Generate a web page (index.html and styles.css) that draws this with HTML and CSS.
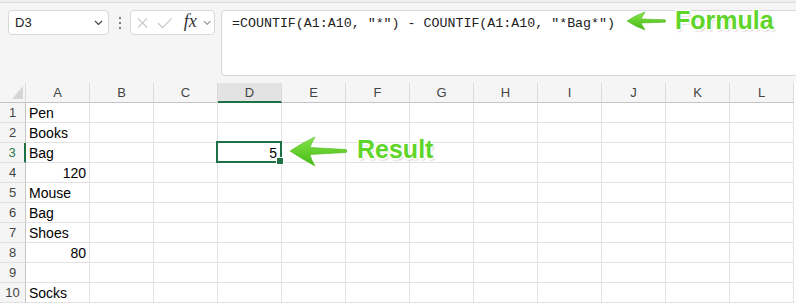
FILE: index.html
```html
<!DOCTYPE html>
<html lang="en">
<head>
    <meta charset="UTF-8">
    <title>COUNTIF Beispiel</title>
    <link rel="stylesheet" href="styles.css">
</head>
<body>
    <div class="page">
        <div class="topline"></div>
        <div class="toolbar">
            <div class="namebox">
                <span>D3</span>
                <svg width="9" height="6" viewBox="0 0 9 6"><path d="M1 1 L4.5 4.5 L8 1" fill="none" stroke="#444" stroke-width="1.2"/></svg>
            </div>
            <div class="dots"><span></span><span></span><span></span></div>
            <div class="fxbox">
                <svg class="ico" width="12" height="12" viewBox="0 0 12 12"><path d="M1 1 L11 11 M11 1 L1 11" stroke="#c4c4c4" stroke-width="1.2"/></svg>
                <svg class="ico" width="17" height="12" viewBox="0 0 17 12"><path d="M1 6 L6 11 L16 1" fill="none" stroke="#c4c4c4" stroke-width="1.2"/></svg>
                <span class="fx">fx</span>
                <svg width="9" height="6" viewBox="0 0 9 6"><path d="M1 1 L4.5 4.5 L8 1" fill="none" stroke="#888" stroke-width="1.1"/></svg>
            </div>
            <div class="formula">=COUNTIF(A1:A10, "*") - COUNTIF(A1:A10, "*Bag*")</div>
        </div>

        <div class="sheet" id="sheet">
            <!-- Zellen werden per Script erzeugt -->
        </div>

        <!-- Hinweise mit Pfeilen -->
        <svg class="arrow arrow-formula" width="44" height="24" viewBox="0 0 44 24">
            <defs>
                <linearGradient id="g1" x1="0" y1="0" x2="0" y2="1">
                    <stop offset="0" stop-color="#86e64a"/>
                    <stop offset="1" stop-color="#45b814"/>
                </linearGradient>
            </defs>
            <path d="M3 12 Q12 6 21 3 Q18 8 17 10 L41 10.8 Q42.5 12 41 13.2 L17 14 Q18 16 21 21 Q12 18 3 12 Z" fill="url(#g1)" stroke="#4fb51f" stroke-width="0.6"/>
        </svg>
        <div class="note note-formula">Formula</div>

        <svg class="arrow arrow-result" width="64" height="36" viewBox="0 0 64 36">
            <defs>
                <linearGradient id="g2" x1="0" y1="0" x2="0" y2="1">
                    <stop offset="0" stop-color="#86e64a"/>
                    <stop offset="1" stop-color="#45b814"/>
                </linearGradient>
            </defs>
            <path d="M3 16 Q15 8 28 2 Q24 9 23 12.5 L59 14.5 Q61 16 59 17.5 L23 19.5 Q24 24 28 31 Q15 24 3 16 Z" fill="url(#g2)" stroke="#4fb51f" stroke-width="0.6"/>
        </svg>
        <div class="note note-result">Result</div>
    </div>

    <script>
        // Spalten und Werte der Tabelle
        const cols = ['A', 'B', 'C', 'D', 'E', 'F', 'G', 'H', 'I', 'J', 'K', 'L'];
        const values = {
            A1: 'Pen', A2: 'Books', A3: 'Bag', A4: 120, A5: 'Mouse',
            A6: 'Bag', A7: 'Shoes', A8: 80, A10: 'Socks', D3: 5
        };
        const sheet = document.getElementById('sheet');

        function addCell(cls, text) {
            const cell = document.createElement('div');
            cell.className = cls;
            cell.innerText = text;
            sheet.appendChild(cell);
            return cell;
        }

        // Kopfzeile
        const corner = addCell('cell corner', '');
        corner.innerHTML = '<svg width="11" height="13" viewBox="0 0 11 13"><path d="M11 0 L11 13 L0 13 Z" fill="#d6d6d6"/></svg>';
        cols.forEach(c => addCell('cell colhead' + (c === 'D' ? ' sel' : ''), c));

        // Zeilen 1 bis 10
        for (let r = 1; r <= 10; r++) {
            addCell('cell rowhead' + (r === 3 ? ' sel' : ''), r);
            cols.forEach(c => {
                const v = values[c + r];
                let cls = 'cell';
                if (typeof v === 'number') cls += ' num';
                if (c + r === 'D3') cls += ' active';
                addCell(cls, v === undefined ? '' : v);
            });
        }
    </script>
</body>
</html>
```

FILE: styles.css
```css
* {
    box-sizing: border-box;
}
body {
    margin: 0;
    background-color: #fff;
    font-family: 'Liberation Sans', Arial, sans-serif;
    color: #000;
    overflow: hidden;
}
.page {
    position: relative;
    width: 796px;
    height: 306px;
    overflow: hidden;
}
.topline {
    height: 2px;
    background-color: #f0f0f0;
}
.toolbar {
    display: flex;
    align-items: flex-start;
    height: 81px;
    padding: 7px 0 0 8px;
    background-color: #f5f5f5;
    border-top: 1px solid #dcdcdc;
}
.namebox {
    width: 101px;
    height: 25px;
    display: flex;
    align-items: center;
    justify-content: space-between;
    padding: 0 5px 0 6px;
    background: white;
    border: 1px solid #d8d8d8;
    border-radius: 4px;
    font-size: 13px;
    color: #222;
}
.dots {
    width: 21px;
    height: 25px;
    display: flex;
    flex-direction: column;
    align-items: center;
    justify-content: center;
    gap: 3px;
}
.dots span {
    width: 2px;
    height: 2px;
    border-radius: 1px;
    background-color: #555;
}
.fxbox {
    width: 85px;
    height: 25px;
    display: flex;
    align-items: center;
    padding: 0 3px 0 6px;
    background: white;
    border: 1px solid #d8d8d8;
    border-radius: 4px;
}
.fxbox .ico {
    margin-right: 9px;
}
.fxbox .fx {
    font-family: 'Liberation Serif', 'Times New Roman', serif;
    font-style: italic;
    font-size: 18px;
    color: #333;
    margin: -2px 6px 0 2px;
}
.formula {
    flex: 1;
    height: 66px;
    margin-left: 6px;
    margin-right: -6px;
    padding: 5px 10px;
    background: white;
    border: 1px solid #d8d8d8;
    border-radius: 4px;
    font-family: 'Liberation Mono', 'Courier New', monospace;
    font-size: 13.3px;
    line-height: 16px;
    color: #222;
    white-space: pre;
}
.sheet {
    display: grid;
    grid-template-columns: 26px repeat(12, 64px);
    grid-auto-rows: 20px;
}
.cell {
    border-right: 1px solid #e1e1e1;
    border-bottom: 1px solid #e1e1e1;
    padding: 2px 3px 0;
    font-size: 14px;
    line-height: 17px;
    white-space: nowrap;
}
.num {
    text-align: right;
}
.corner {
    background-color: #f5f5f5;
    border-right-color: #dadada;
    border-bottom-color: #c4c4c4;
    padding: 3px 3px 0 12px;
}
.corner svg {
    display: block;
}
.colhead {
    background-color: #f5f5f5;
    border-right-color: #dadada;
    border-bottom-color: #c4c4c4;
    padding: 0;
    text-align: center;
    font-size: 13px;
    line-height: 19px;
    color: #444;
}
.colhead.sel {
    background-color: #e3e3e3;
    border-bottom: 2px solid #1e7145;
}
.rowhead {
    background-color: #f5f5f5;
    border-right-color: #c4c4c4;
    border-bottom-color: #e1e1e1;
    padding: 0;
    text-align: center;
    font-size: 13px;
    line-height: 20px;
    color: #444;
}
.rowhead.sel {
    color: #2a7a4c;
    border-right: 2px solid #1e7145;
}
.active {
    position: relative;
    z-index: 1;
    padding-right: 4px;
}
.active::before {
    content: '';
    position: absolute;
    left: -2px;
    top: -2px;
    right: -1px;
    bottom: -1px;
    border: 2px solid #1e7145;
}
.active::after {
    content: '';
    position: absolute;
    right: -3px;
    bottom: -3px;
    width: 6px;
    height: 6px;
    background-color: #1e7145;
    border: 1px solid white;
}
.arrow {
    position: absolute;
}
.arrow-formula {
    left: 624px;
    top: 9px;
}
.arrow-result {
    left: 287px;
    top: 135px;
}
.note {
    position: absolute;
    font-weight: bold;
    font-size: 25px;
    line-height: 25px;
    color: #5fd52a;
    text-shadow: -1px -1px 0 #fff, 1px -1px 0 #fff, -1px 1px 0 #fff, 1px 1px 0 #fff,
        0 -1.5px 0 #fff, 0 1.5px 0 #fff, -1.5px 0 0 #fff, 1.5px 0 0 #fff,
        1px 2px 2px rgba(0,0,0,0.35);
}
.note-formula {
    left: 675px;
    top: 8px;
}
.note-result {
    left: 357px;
    top: 137px;
}
```
